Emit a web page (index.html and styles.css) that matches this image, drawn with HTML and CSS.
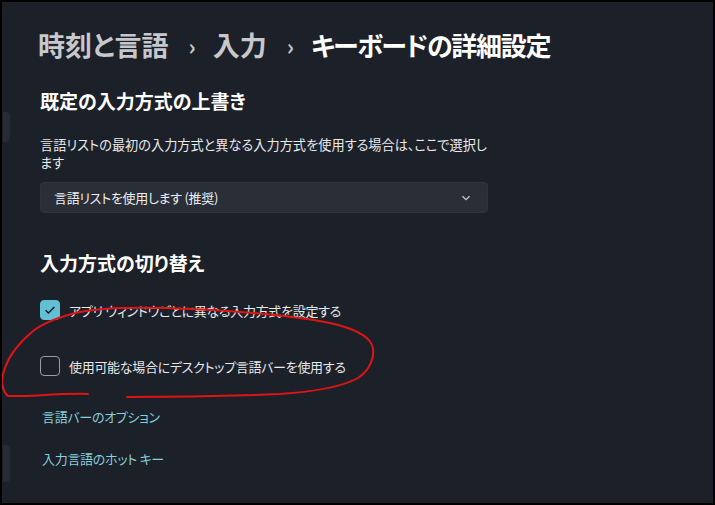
FILE: index.html
```html
<!DOCTYPE html>
<html>
	<head>
		<meta charset="UTF-8">
		<title>キーボードの詳細設定</title>
		<link rel="stylesheet" href="styles.css">
	</head>
	<body>
		<div id="frame">
			<div class="navEdge top"></div>
			<div class="navEdge bottom"></div>
			<div class="content">
				<h1 class="crumbs">
					<span class="past">時刻と言語</span>
					<span class="sep">›</span>
					<span class="past">入力</span>
					<span class="sep">›</span>
					<span class="now">キーボードの詳細設定</span>
				</h1>

				<h2 class="head first">既定の入力方式の上書き</h2>
				<p class="desc">言語リストの最初の入力方式と異なる入力方式を使用する場合は、ここで選択します</p>
				<div class="select">
					<span>言語リストを使用します (推奨)</span>
					<svg width="10" height="6" viewBox="0 0 10 6"><path d="M1.5 1.2 L5 4.6 L8.5 1.2" fill="none" stroke="#c9ccd1" stroke-width="1.2"/></svg>
				</div>

				<h2 class="head">入力方式の切り替え</h2>
				<div class="checks">
					<div class="check">
						<span class="box on">
							<svg width="12" height="10" viewBox="0 0 12 10"><path d="M1.6 5.2 L4.4 8 L10.4 2" fill="none" stroke="#10161c" stroke-width="1.4"/></svg>
						</span>
						<span>アプリ ウィンドウごとに異なる入力方式を設定する</span>
					</div>
					<div class="check">
						<span class="box"></span>
						<span>使用可能な場合にデスクトップ言語バーを使用する</span>
					</div>
				</div>

				<div class="links">
					<a href="#">言語バーのオプション</a>
					<a href="#">入力言語のホット キー</a>
				</div>
			</div>
			<!-- 手書きの赤い囲み -->
			<svg class="mark" width="711" height="501" viewBox="2 2 711 501">
				<path d="M88 394 C60 393 25 397 8 396 C1 390 1 378 5 368 C9 356 20 342 33 331 C45 322 62 316 80 312 C110 306 150 307 190 309 C235 311 285 314 330 323 C352 328 368 335 372 345 C376 356 370 370 358 378 C340 388 310 392 280 394 C230 396 170 397 127 397" fill="none" stroke="#e01414" stroke-width="2" stroke-linecap="round"/>
			</svg>
		</div>
	</body>
</html>
```
FILE: styles.css
```css
*{
	margin:0;
	padding:0;
	box-sizing:border-box;
}
body{
	background:#000;
	font-family:"Noto Sans CJK JP", "Liberation Sans", sans-serif;
	font-feature-settings:"palt";
	color:#ffffff;
}
div#frame{
	position:relative;
	width:715px;
	height:505px;
	border:2px solid #000;
	background:#1c2029;
	overflow:hidden;
}
div.navEdge{
	position:absolute;
	left:1px;
	width:7px;
	background:#262b34;
	border-radius:0 4px 4px 0;
}
div.navEdge.top{
	top:110px;
	height:30px;
}
div.navEdge.bottom{
	top:443px;
	height:37px;
}
div.content{
	padding:25px 0 0 38px;
}
h1.crumbs{
	display:flex;
	align-items:center;
	height:36px;
	margin-left:-2px;
	font-size:27px;
	font-weight:600;
	line-height:36px;
}
h1.crumbs .past{
	color:#c6c8cc;
}
h1.crumbs .sep{
	color:#c6c8cc;
	font-size:22px;
	margin:0 17px 0 20px;
}
h1.crumbs .now{
	color:#ffffff;
	font-size:26px;
	letter-spacing:-1.3px;
}
h2.head{
	font-size:19px;
	font-weight:700;
	line-height:28px;
	margin-top:36px;
}
h2.head.first{
	margin-top:24px;
}
p.desc{
	width:456px;
	margin-top:21px;
	font-size:13.2px;
	line-height:18px;
	color:#e8e9eb;
}
div.select{
	display:flex;
	align-items:center;
	justify-content:space-between;
	width:448px;
	height:31px;
	margin-top:10px;
	padding:0 16px 0 13px;
	background:#2a2e37;
	border:1px solid #2e333c;
	border-radius:4px;
	font-size:13px;
	letter-spacing:-0.3px;
	color:#eeeff1;
}
div.checks{
	display:flex;
	flex-direction:column;
	gap:16px;
	margin-top:13px;
}
div.check{
	display:flex;
	align-items:center;
	gap:9px;
	height:40px;
	font-size:13px;
	letter-spacing:-0.3px;
	color:#e8e9eb;
}
span.box{
	display:flex;
	align-items:center;
	justify-content:center;
	width:20px;
	height:20px;
	border:1px solid #9a9da3;
	border-radius:4px;
}
span.box.on{
	background:#62bfd4;
	border-color:#62bfd4;
}
div.links{
	display:flex;
	flex-direction:column;
	gap:22px;
	margin-top:21px;
	padding-left:2px;
}
div.links a{
	font-size:13px;
	letter-spacing:-0.3px;
	line-height:20px;
	color:#86cfdb;
	text-decoration:none;
}
svg.mark{
	position:absolute;
	left:0;
	top:0;
	pointer-events:none;
}
```
